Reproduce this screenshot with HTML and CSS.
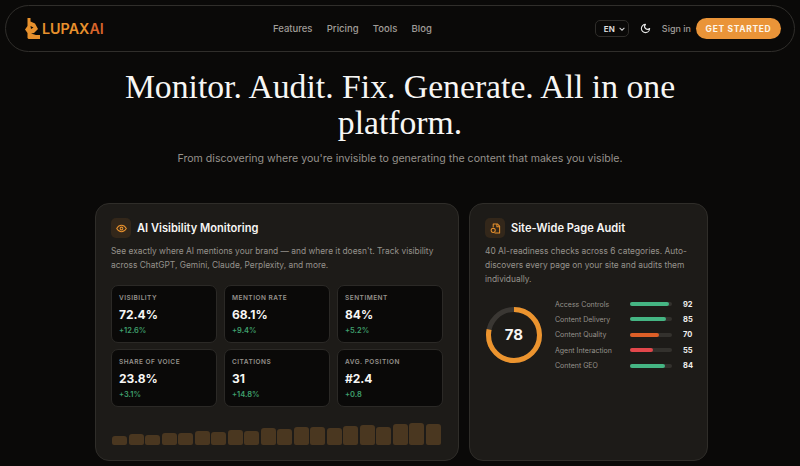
FILE: index.html
```html
<!DOCTYPE html>
<html lang="en">
<head>
<meta charset="utf-8">
<title>LupaxAI</title>
<link rel="stylesheet" href="styles.css">
</head>
<body>
<header class="nav">
  <a class="logo">
    <svg class="logo-mark" viewBox="0 0 16 22" width="16" height="22"><path fill="#e8912d" d="M2.500 0H5.500V3.500L10 5.500 13 11 9 15 6 15.500 11 17H15V21H3.500L2.500 20V15L0 11.500 2.500 8z"/><path fill="#0a0908" d="M5.500 8l3 1.500-2.500 1.500z"/></svg>
    <span class="logo-text">LUPAX<span class="logo-ai">AI</span></span>
  </a>
  <nav class="links">
    <span>Features</span><span>Pricing</span><span>Tools</span><span>Blog</span>
  </nav>
  <div class="actions">
    <div class="lang">EN
      <svg viewBox="0 0 10 10" width="8" height="8"><path d="M2 3.500 5 6.500 8 3.500" fill="none" stroke="#d0d0d0" stroke-width="1.300"/></svg>
    </div>
    <svg class="moon" viewBox="0 0 24 24" width="11" height="11"><path d="M12 3a6 6 0 0 0 9 9 9 9 0 1 1-9-9z" fill="none" stroke="#e4e4e4" stroke-width="2.400" stroke-linejoin="round"/></svg>
    <span class="signin">Sign in</span>
    <span class="cta">GET STARTED</span>
  </div>
</header>

<section class="hero">
  <h1>Monitor. Audit. Fix. Generate. All in one platform.</h1>
  <p>From discovering where you're invisible to generating the content that makes you visible.</p>
</section>

<main class="cards">
  <article class="card card-wide">
    <div class="card-head">
      <div class="icon-box">
        <svg viewBox="0 0 24 24" width="11" height="11" fill="none" stroke="#e8912d" stroke-width="2.200"><path d="M1.500 12S5.500 5 12 5s10.500 7 10.500 7-4 7-10.500 7S1.500 12 1.500 12z"/><circle cx="12" cy="12" r="3"/></svg>
      </div>
      <h2>AI Visibility Monitoring</h2>
    </div>
    <p class="desc">See exactly where AI mentions your brand — and where it doesn't. Track visibility across ChatGPT, Gemini, Claude, Perplexity, and more.</p>
    <div class="stats">
      <div class="stat"><div class="stat-label">VISIBILITY</div><div class="stat-value">72.4%</div><div class="stat-delta">+12.6%</div></div>
      <div class="stat"><div class="stat-label">MENTION RATE</div><div class="stat-value">68.1%</div><div class="stat-delta">+9.4%</div></div>
      <div class="stat"><div class="stat-label">SENTIMENT</div><div class="stat-value">84%</div><div class="stat-delta">+5.2%</div></div>
      <div class="stat"><div class="stat-label">SHARE OF VOICE</div><div class="stat-value">23.8%</div><div class="stat-delta">+3.1%</div></div>
      <div class="stat"><div class="stat-label">CITATIONS</div><div class="stat-value">31</div><div class="stat-delta">+14.8%</div></div>
      <div class="stat"><div class="stat-label">AVG. POSITION</div><div class="stat-value">#2.4</div><div class="stat-delta">+0.8</div></div>
    </div>
    <div class="spark">
      <i style="height:9px"></i><i style="height:11px"></i><i style="height:10px"></i><i style="height:12.500px"></i><i style="height:12px"></i><i style="height:14px"></i><i style="height:13px"></i><i style="height:15px"></i><i style="height:14.500px"></i><i style="height:17px"></i><i style="height:16px"></i><i style="height:18px"></i><i style="height:18px"></i><i style="height:17px"></i><i style="height:19px"></i><i style="height:20px"></i><i style="height:18.500px"></i><i style="height:21px"></i><i style="height:22px"></i><i style="height:21px"></i>
    </div>
  </article>

  <article class="card card-narrow">
    <div class="card-head">
      <div class="icon-box">
        <svg viewBox="0 0 24 24" width="11" height="11" fill="none" stroke="#e8912d" stroke-width="2.200" stroke-linejoin="round"><path d="M7 9V2h9l5 5v15H10"/><path d="M15 2v6h6"/><circle cx="7" cy="16" r="4.500"/><path d="M7 11v2"/></svg>
      </div>
      <h2>Site-Wide Page Audit</h2>
    </div>
    <p class="desc">40 AI-readiness checks across 6 categories. Auto-discovers every page on your site and audits them individually.</p>
    <div class="audit">
      <div class="ring">
        <svg viewBox="0 0 56 56" width="56" height="56">
          <circle cx="28" cy="28" r="25.500" fill="none" stroke="#3a3733" stroke-width="5"/>
          <circle cx="28" cy="28" r="25.500" fill="none" stroke="#ec942e" stroke-width="5" stroke-dasharray="125 160" transform="rotate(-90 28 28)"/>
        </svg>
        <span class="ring-value">78</span>
      </div>
      <div class="rows">
        <div class="row"><span class="row-label">Access Controls</span><span class="track"><b class="fill green" style="width:92%"></b></span><span class="row-value">92</span></div>
        <div class="row"><span class="row-label">Content Delivery</span><span class="track"><b class="fill green" style="width:85%"></b></span><span class="row-value">85</span></div>
        <div class="row"><span class="row-label">Content Quality</span><span class="track"><b class="fill orange" style="width:70%"></b></span><span class="row-value">70</span></div>
        <div class="row"><span class="row-label">Agent Interaction</span><span class="track"><b class="fill red" style="width:55%"></b></span><span class="row-value">55</span></div>
        <div class="row"><span class="row-label">Content GEO</span><span class="track"><b class="fill green" style="width:84%"></b></span><span class="row-value">84</span></div>
      </div>
    </div>
  </article>
</main>
</body>
</html>
```
FILE: styles.css
```css
* { box-sizing: border-box; }
html, body { margin: 0; height: 466px; overflow: hidden; }
body {
  background: #0a0908;
  font-family: Inter, "Liberation Sans", sans-serif;
  color: #f5f5f4;
  padding-top: 5px;
}
.nav {
  margin: 0 5px;
  height: 47px;
  border: 1px solid #302e2b;
  border-radius: 24px;
  display: flex;
  align-items: center;
  padding: 0 13px 0 19px;
  position: relative;
}
.logo { display: flex; align-items: center; gap: 1px; width: 80px; }
.logo-text { font-size: 14.300px; font-weight: 600; color: #e8912d; }
.logo-ai { color: #d9642b; }
.links {
  display: flex;
  gap: 14.300px;
  font-size: 9.500px;
  font-weight: 500;
  color: #a09d98;
  margin-left: 168px;
}
.actions { margin-left: auto; display: flex; align-items: center; }
.lang {
  width: 34px;
  height: 17px;
  border: 1px solid #2f2d2a;
  border-radius: 5px;
  font-size: 8px;
  font-weight: 600;
  color: #e4e4e4;
  display: flex;
  align-items: center;
  justify-content: space-between;
  padding: 0 2px 0 8px;
}
.moon { margin-left: 11.500px; }
.signin { margin-left: 10.500px; font-size: 9px; font-weight: 500; color: #a09d98; }
.cta {
  margin-left: 5px;
  width: 85px;
  height: 21px;
  border-radius: 11px;
  background: #ea9438;
  color: #fdf6ea;
  font-size: 8.500px;
  font-weight: 700;
  letter-spacing: 0.650px;
  display: flex;
  align-items: center;
  justify-content: center;
}
.hero { text-align: center; }
.hero h1 {
  margin: 17px auto 0;
  width: 600px;
  font-family: "Liberation Serif", serif;
  font-size: 33.700px;
  line-height: 36px;
  font-weight: 400;
  color: #f7f6f4;
}
.hero p { margin: 8.500px 0 0; font-size: 10.600px; line-height: 17px; color: #96928c; }
.cards {
  margin: 36.500px 0 0 95px;
  width: 613px;
  height: 258px;
  display: flex;
  gap: 10px;
}
.card {
  background: #1d1b18;
  border: 1px solid #2f2d29;
  border-radius: 14px;
  padding: 14px 15px;
}
.card-wide { width: 364px; }
.card-narrow { width: 239px; }
.card-head { display: flex; align-items: center; gap: 6px; height: 20px; }
.icon-box {
  width: 20px;
  height: 20px;
  border-radius: 5px;
  background: #33271a;
  display: flex;
  align-items: center;
  justify-content: center;
  flex: none;
}
.card h2 { margin: 0; font-size: 11.100px; font-weight: 600; color: #f7f6f4; }
.desc { margin: 6px 0 0; font-size: 8.400px; line-height: 14px; color: #96928c; }
.stats {
  margin-top: 13px;
  display: grid;
  grid-template-columns: repeat(3, 105.500px);
  grid-auto-rows: 57.500px;
  gap: 6.500px 7.500px;
}
.stat {
  background: #0a0908;
  border: 1px solid #2b2926;
  border-radius: 7px;
  padding: 8px 7px;
}
.stat-label { font-size: 6.500px; line-height: 9px; font-weight: 600; letter-spacing: 0.500px; color: #96928c; }
.stat-value { margin-top: 3px; font-size: 12px; line-height: 17px; font-weight: 700; color: #f7f6f4; }
.stat-delta { margin-top: 3px; font-size: 7.500px; line-height: 10px; font-weight: 600; color: #3f9f6c; }
.spark {
  margin-top: 15.500px;
  height: 23px;
  display: flex;
  align-items: flex-end;
  gap: 1.500px;
  padding-left: 1px;
}
.spark i {
  display: block;
  width: 15px;
  border-radius: 3px 3px 2px 2px;
  background: #4a3720;
}
.audit { margin-top: 12px; display: flex; align-items: center; gap: 13px; }
.ring { position: relative; width: 56px; height: 56px; flex: none; margin-left: 1px; }
.ring svg { display: block; }
.ring-value {
  position: absolute;
  inset: 0;
  display: flex;
  align-items: center;
  justify-content: center;
  font-size: 15px;
  font-weight: 700;
  color: #f7f6f4;
}
.rows { flex: 1; display: flex; flex-direction: column; gap: 3.400px; }
.row { display: flex; align-items: center; height: 12px; }
.row-label { width: 75px; font-size: 7px; color: #96928c; white-space: nowrap; }
.track { width: 42px; height: 4px; border-radius: 2px; background: #33312d; display: block; }
.fill { display: block; height: 4px; border-radius: 2px; }
.green { background: #45b583; }
.orange { background: #dd5f27; }
.red { background: #e2474b; }
.row-value { margin-left: 11px; font-size: 7.500px; font-weight: 700; color: #f0efed; }
```
